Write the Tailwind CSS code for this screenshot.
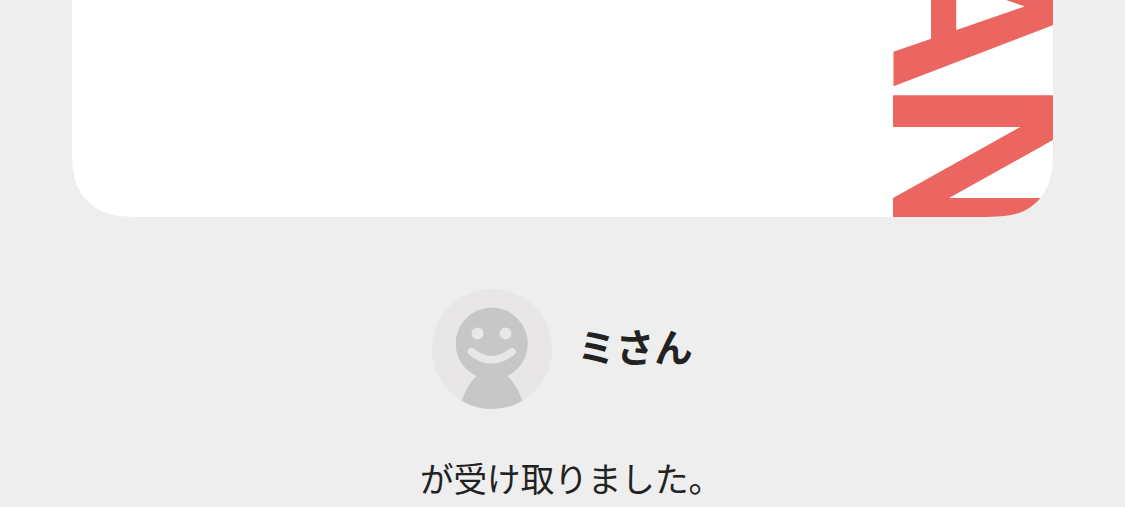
<!DOCTYPE html>
<html lang="ja">
<head>
<meta charset="utf-8">
<title>ミさん</title>
<script src="https://cdn.jsdelivr.net/npm/@tailwindcss/browser@4"></script>
</head>
<body class="h-[507px] w-[1125px] overflow-hidden bg-[#eeeeee] font-['Noto_Sans_CJK_JP',sans-serif] text-[#222222]">
<main class="flex flex-col items-center">
  <svg class="block h-[217px] w-[981px]" viewBox="0 0 981 217">
    <defs>
      <clipPath id="card"><path id="shape" d="M0 0H981V134.5C981 158.2 981 170.1 977 182.9C971.9 196.9 960.9 207.9 946.9 213C934.1 217 922.2 217 898.5 217H82.5C58.8 217 46.9 217 34.1 213C20.1 207.9 9.1 196.9 4 182.9C0 170.1 0 158.2 0 134.5Z"/></clipPath>
    </defs>
    <g clip-path="url(#card)">
      <rect width="981" height="217" fill="#fff"/>
      <g class="font-['Roboto'] font-semibold" fill="#eb6660">
        <text class="text-[238px]" transform="translate(821 6.5) rotate(90) scale(1.02 1)" text-anchor="middle">A</text>
        <text class="text-[258px]" transform="translate(821 162.5) rotate(90) scale(.91 1)" text-anchor="middle">N</text>
      </g>
    </g>
  </svg>
  <div class="mt-[72px] flex items-center gap-[26px]">
    <svg class="size-[120px]" viewBox="0 0 120 120">
      <defs><clipPath id="round"><circle cx="60" cy="60" r="60"/></clipPath></defs>
      <g clip-path="url(#round)">
        <rect width="120" height="120" fill="#e8e6e7"/>
        <path d="M44.5 87Q35 96 29 113V120H91V113Q85 96 75.5 87Z" fill="#c7c7c7"/>
        <circle cx="59.7" cy="54.6" r="36" fill="#c7c7c7"/>
        <circle cx="45.5" cy="44.5" r="6" fill="#e8e6e7"/>
        <circle cx="73.5" cy="44.5" r="6" fill="#e8e6e7"/>
        <path d="M39.5 62.7Q59.7 79 80 62.7" fill="none" stroke="#e8e6e7" stroke-width="7.6" stroke-linecap="round"/>
      </g>
    </svg>
    <h1 class="-ml-px mb-[9px] text-[38.5px] leading-[58px] font-bold">ミさん</h1>
  </div>
  <p class="mt-[44px] pl-[17px] text-[33.6px] leading-[50px]">が受け取りました。</p>
</main>
</body>
</html>
